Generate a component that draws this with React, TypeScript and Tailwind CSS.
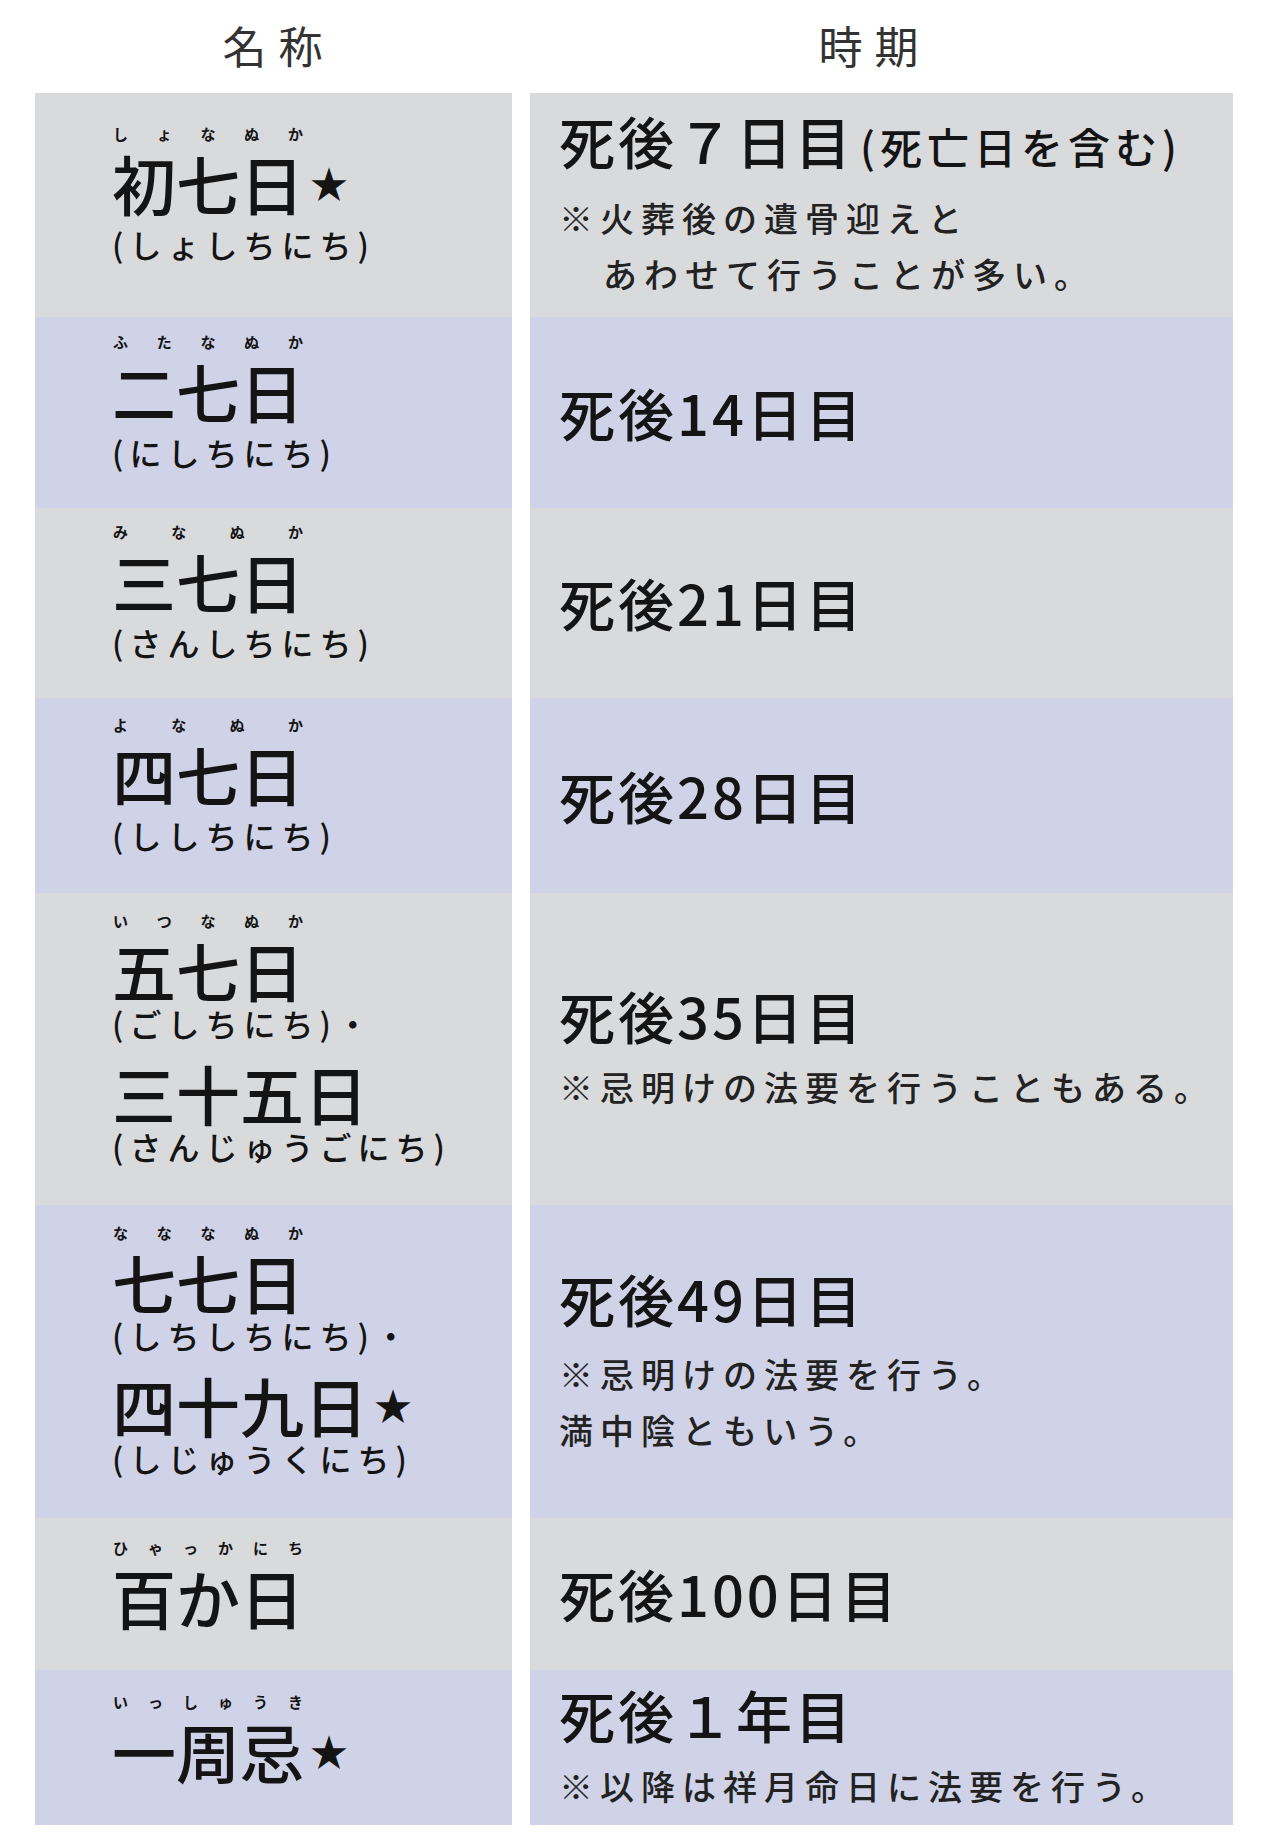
const GRAY = 'bg-[#d9dadc]';
const LAV = 'bg-[#d0d2e8]';

interface Name {
  ruby?: string;
  kanji: string;
  star?: boolean;
  reading: string;
}

interface Note {
  text: string;
  cls?: string;
}

interface Row {
  bg: string;
  h: string;
  readGap: string;
  names: Name[];
  period: string;
  sub?: string;
  notes: Note[];
}

const rows: Row[] = [
  {
    bg: GRAY,
    h: 'h-[224px]',
    readGap: 'mt-[10px]',
    names: [{ ruby: 'しょなぬか', kanji: '初七日', star: true, reading: '(しょしちにち)' }],
    period: '死後７日目',
    sub: '(死亡日を含む)',
    notes: [
      { text: '※火葬後の遺骨迎えと' },
      { text: 'あわせて行うことが多い。', cls: 'pl-[44px] mt-[8px]' },
    ],
  },
  {
    bg: LAV,
    h: 'h-[191px]',
    readGap: 'mt-[10px]',
    names: [{ ruby: 'ふたなぬか', kanji: '二七日', reading: '(にしちにち)' }],
    period: '死後14日目',
    notes: [],
  },
  {
    bg: GRAY,
    h: 'h-[190px]',
    readGap: 'mt-[10px]',
    names: [{ ruby: 'みなぬか', kanji: '三七日', reading: '(さんしちにち)' }],
    period: '死後21日目',
    notes: [],
  },
  {
    bg: LAV,
    h: 'h-[195px]',
    readGap: 'mt-[10px]',
    names: [{ ruby: 'よなぬか', kanji: '四七日', reading: '(ししちにち)' }],
    period: '死後28日目',
    notes: [],
  },
  {
    bg: GRAY,
    h: 'h-[312px]',
    readGap: 'mt-[2px]',
    names: [
      { ruby: 'いつなぬか', kanji: '五七日', reading: '(ごしちにち)・' },
      { kanji: '三十五日', reading: '(さんじゅうごにち)' },
    ],
    period: '死後35日目',
    notes: [{ text: '※忌明けの法要を行うこともある。' }],
  },
  {
    bg: LAV,
    h: 'h-[313px]',
    readGap: 'mt-[2px]',
    names: [
      { ruby: 'なななぬか', kanji: '七七日', reading: '(しちしちにち)・' },
      { kanji: '四十九日', star: true, reading: '(しじゅうくにち)' },
    ],
    period: '死後49日目',
    notes: [
      { text: '※忌明けの法要を行う。', cls: 'mt-[22px]' },
      { text: '満中陰ともいう。', cls: 'mt-[8px]' },
    ],
  },
  {
    bg: GRAY,
    h: 'h-[152px]',
    readGap: 'mt-[10px]',
    names: [{ ruby: 'ひゃっかにち', kanji: '百か日', reading: '' }],
    period: '死後100日目',
    notes: [],
  },
  {
    bg: LAV,
    h: 'h-[155px]',
    readGap: 'mt-[10px]',
    names: [{ ruby: 'いっしゅうき', kanji: '一周忌', star: true, reading: '' }],
    period: '死後１年目',
    notes: [{ text: '※以降は祥月命日に法要を行う。' }],
  },
];

function NameBlock({ name, gap, first }: { name: Name; gap: string; first: boolean }) {
  return (
    <div className={first ? '' : 'mt-[17px]'}>
      <div className="flex items-end">
        <div className="flex flex-col">
          {name.ruby && (
            <div className="flex justify-between px-[1px] mb-[6px] text-[15px] leading-[20px] font-bold">
              {name.ruby.split('').map((c, i) => (
                <span key={i}>{c}</span>
              ))}
            </div>
          )}
          <div className="text-[64px] leading-[64px] font-medium">{name.kanji}</div>
        </div>
        {name.star && <span className="ml-[6px] mb-[13px] text-[38px] leading-[38px]">★</span>}
      </div>
      {name.reading && (
        <div className={`${gap} text-[32px] leading-[40px] tracking-[6px] font-medium`}>{name.reading}</div>
      )}
    </div>
  );
}

export default function App() {
  return (
    <div className="w-[1279px] h-[1835px] bg-white text-[#141414] font-['Noto_Sans_CJK_JP','Noto_Sans_CJK_SC',sans-serif]">
      <div className="ml-[35px] grid grid-cols-[477px_703px] gap-x-[18px]">
        <div className="h-[93px] flex items-center justify-center pb-[4px] pl-[10px] text-[44px] tracking-[12px] text-[#333333]">
          名称
        </div>
        <div className="h-[93px] flex items-center justify-center pb-[4px] pr-[14px] text-[44px] tracking-[12px] text-[#333333]">
          時期
        </div>

        {rows.map((row, i) => (
          <div key={i} className="contents">
            <div className={`${row.bg} ${row.h} flex flex-col justify-center pl-[77px] pb-[22px]`}>
              {row.names.map((n, j) => (
                <NameBlock key={j} name={n} gap={row.readGap} first={j === 0} />
              ))}
            </div>
            <div className={`${row.bg} ${row.h} flex flex-col justify-center pl-[29px] pb-[2px]`}>
              <div className="flex items-baseline">
                <span className="text-[56px] leading-[60px] tracking-[3px] font-medium">{row.period}</span>
                {row.sub && (
                  <span className="ml-[6px] text-[42px] leading-[60px] tracking-[5px] font-medium">{row.sub}</span>
                )}
              </div>
              {row.notes.map((n, j) => (
                <div
                  key={j}
                  className={`${j === 0 ? 'mt-[18px]' : ''} ${n.cls ?? ''} text-[34px] leading-[48px] tracking-[7px] font-medium text-[#222222]`}
                >
                  {n.text}
                </div>
              ))}
            </div>
          </div>
        ))}
      </div>
    </div>
  );
}
